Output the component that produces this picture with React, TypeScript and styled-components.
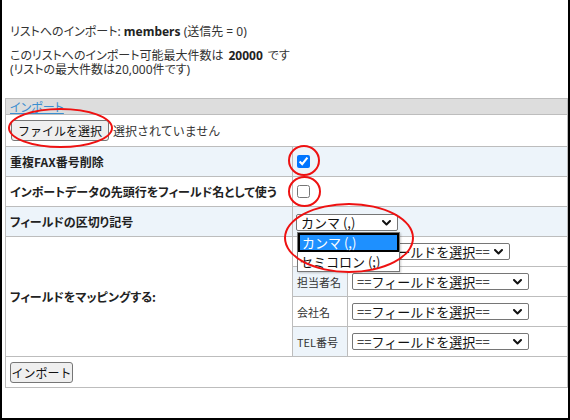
import React from "react";
import styled, { createGlobalStyle } from "styled-components";

const GlobalStyle = createGlobalStyle`
  html, body {
    margin: 0;
    padding: 0;
    background: #fff;
  }
  body {
    font-family: "Noto Sans", "Noto Sans CJK JP", sans-serif;
    font-size: 12px;
    color: #333;
  }
`;

const FONT = `"Noto Sans CJK JP", "Noto Sans", sans-serif`;

const Page = styled.div`
  position: relative;
  box-sizing: border-box;
  width: 570px;
  height: 420px;
  border: 2px solid #000;
  border-top: none;
  overflow: hidden;
  background: #fff;
`;

const Intro = styled.div`
  padding: 24px 0 0 8px;
  font-feature-settings: "palt";
`;

const Title = styled.p`
  margin: 0;
  line-height: 16px;
  color: #333;
  b {
    color: #222;
  }
`;

const Limit = styled.p`
  margin: 9px 0 0;
  line-height: 14px;
  b {
    color: #222;
    margin: 0 5px;
  }
`;

const FormTable = styled.table`
  margin: 21px 0 0 3px;
  width: calc(100% - 3px);
  table-layout: fixed;
  border-collapse: collapse;
  border: 1px solid #bdbdbd;
  font-family: ${FONT};
  font-feature-settings: "palt";
`;

const Col = styled.col<{ $w?: number }>`
  width: ${(p) => (p.$w ? `${p.$w}px` : "auto")};
`;

const HeadCell = styled.td`
  background: #dddddd;
  border: 1px solid #bdbdbd;
  height: 15px;
  padding: 0 4px;
  line-height: 14px;
  a {
    color: #3b8ed0;
    text-decoration: underline;
  }
`;

const Row = styled.tr<{ $tint?: boolean }>`
  background: ${(p) => (p.$tint ? "#edf4fa" : "#fff")};
`;

const LabelCell = styled.td<{ $h: number }>`
  height: ${(p) => p.$h}px;
  padding: 0 4px;
  border: 1px solid #bdbdbd;
  font-weight: bold;
  color: #222;
  line-height: 16px;
  box-sizing: border-box;
  white-space: nowrap;
`;

const FieldCell = styled.td<{ $flush?: boolean }>`
  padding: ${(p) => (p.$flush ? "0" : "0 3px")};
  border: 1px solid #bdbdbd;
  vertical-align: ${(p) => (p.$flush ? "top" : "middle")};
`;

const WideCell = styled.td<{ $h: number }>`
  height: ${(p) => p.$h}px;
  padding: 0 4px;
  border: 1px solid #bdbdbd;
  box-sizing: border-box;
`;

const FileRow = styled.div`
  display: flex;
  align-items: center;
  gap: 4px;
  padding-left: 1px;
`;

const PlainButton = styled.button<{ $w: number }>`
  width: ${(p) => p.$w}px;
  height: 21px;
  padding: 0;
  background: #efefef;
  border: 1px solid #767676;
  border-radius: 3px;
  font-family: ${FONT};
  font-feature-settings: normal;
  font-size: 12px;
  color: #111;
  line-height: 19px;
`;

const NoFile = styled.span`
  font-size: 12px;
  font-feature-settings: normal;
  color: #333;
`;

const Check = styled.input`
  width: 13px;
  height: 13px;
  margin: 0 0 0 1px;
  display: block;
`;

const SelectWrap = styled.div`
  position: relative;
  display: inline-block;
  vertical-align: middle;
`;

const SelectBox = styled.div<{ $w: number }>`
  box-sizing: border-box;
  width: ${(p) => p.$w}px;
  height: 17px;
  display: flex;
  align-items: center;
  justify-content: space-between;
  padding: 0 6px 0 4px;
  font-family: ${FONT};
  font-feature-settings: normal;
  font-size: 13px;
  line-height: 15px;
  color: #111;
  background: #fff;
  border: 1px solid #767676;
  border-radius: 2px;
  white-space: nowrap;
  overflow: hidden;
  svg {
    flex: none;
  }
`;

const OptionList = styled.div`
  position: absolute;
  top: 18px;
  left: 1px;
  width: 103px;
  box-sizing: border-box;
  border: 1px solid #767676;
  background: #fff;
  z-index: 5;
  font-feature-settings: normal;
  box-shadow: 1px 1px 2px rgba(0, 0, 0, 0.2);
`;

const Option = styled.div<{ $active?: boolean }>`
  height: ${(p) => (p.$active ? "15px" : "19px")};
  line-height: ${(p) => (p.$active ? "15px" : "19px")};
  padding: 0 2px;
  font-size: 13px;
  color: ${(p) => (p.$active ? "#fff" : "#111")};
  background: ${(p) => (p.$active ? "#1e90ff" : "#fff")};
  border: ${(p) => (p.$active ? "2px solid #000" : "none")};
  white-space: nowrap;
`;

const MapTable = styled.table`
  width: 100%;
  border-collapse: collapse;
  tr:first-child td {
    border-top: none;
  }
  tr:last-child td {
    border-bottom: none;
  }
  td:first-child {
    border-left: none;
  }
  td:last-child {
    border-right: none;
  }
`;

const MapLabel = styled.td<{ $tint?: boolean }>`
  width: 46px;
  height: 29px;
  padding: 0 4px;
  border: 1px solid #bdbdbd;
  background: ${(p) => (p.$tint ? "#edf4fa" : "#fff")};
  color: #333;
  font-size: 11px;
  white-space: nowrap;
`;

const MapField = styled.td`
  padding: 0 4px;
  border: 1px solid #bdbdbd;
  background: #fff;
`;

const Ring = styled.div<{ $x: number; $y: number; $w: number; $h: number }>`
  position: absolute;
  left: ${(p) => p.$x}px;
  top: ${(p) => p.$y}px;
  width: ${(p) => p.$w}px;
  height: ${(p) => p.$h}px;
  box-sizing: border-box;
  border: 2px solid #ee1111;
  border-radius: 50%;
  pointer-events: none;
  z-index: 10;
`;

const Chevron = () => (
  <svg width="9" height="6" viewBox="0 0 9 6">
    <polyline
      points="1,1 4.5,4.5 8,1"
      fill="none"
      stroke="#111"
      strokeWidth="2"
      strokeLinecap="round"
      strokeLinejoin="round"
    />
  </svg>
);

const FakeSelect = ({ width, value }: { width: number; value: string }) => (
  <SelectBox $w={width}>
    <span>{value}</span>
    <Chevron />
  </SelectBox>
);

const mapping = [
  { label: "FAX番号", width: 158 },
  { label: "担当者名", width: 177 },
  { label: "会社名", width: 177 },
  { label: "TEL番号", width: 177 },
];

export default function App() {
  return (
    <Page>
      <GlobalStyle />
      <Intro>
        <Title>
          リストへのインポート: <b>members</b> (送信先 = 0)
        </Title>
        <Limit>
          このリストへのインポート可能最大件数は<b>20000</b>です
          <br />
          (リストの最大件数は20,000件です)
        </Limit>
      </Intro>

      <FormTable>
        <colgroup>
          <Col $w={287} />
          <Col />
        </colgroup>
        <tbody>
          <tr>
            <HeadCell colSpan={2}>
              <a>インポート</a>
            </HeadCell>
          </tr>
          <Row>
            <WideCell colSpan={2} $h={32}>
              <FileRow>
                <PlainButton $w={98}>ファイルを選択</PlainButton>
                <NoFile>選択されていません</NoFile>
              </FileRow>
            </WideCell>
          </Row>
          <Row $tint>
            <LabelCell $h={30}>重複FAX番号削除</LabelCell>
            <FieldCell>
              <Check type="checkbox" defaultChecked />
            </FieldCell>
          </Row>
          <Row>
            <LabelCell $h={30}>インポートデータの先頭行をフィールド名として使う</LabelCell>
            <FieldCell>
              <Check type="checkbox" />
            </FieldCell>
          </Row>
          <Row $tint>
            <LabelCell $h={30}>フィールドの区切り記号</LabelCell>
            <FieldCell>
              <SelectWrap>
                <FakeSelect width={102} value="カンマ (,)" />
                <OptionList>
                  <Option $active>カンマ (,)</Option>
                  <Option>セミコロン (;)</Option>
                </OptionList>
              </SelectWrap>
            </FieldCell>
          </Row>
          <Row>
            <LabelCell $h={120}>フィールドをマッピングする:</LabelCell>
            <FieldCell $flush>
              <MapTable>
                <tbody>
                  {mapping.map((m, i) => (
                    <tr key={m.label}>
                      <MapLabel $tint={i % 2 === 1}>{m.label}</MapLabel>
                      <MapField>
                        <FakeSelect width={m.width} value="==フィールドを選択==" />
                      </MapField>
                    </tr>
                  ))}
                </tbody>
              </MapTable>
            </FieldCell>
          </Row>
          <Row>
            <WideCell colSpan={2} $h={31}>
              <PlainButton $w={63}>インポート</PlainButton>
            </WideCell>
          </Row>
        </tbody>
      </FormTable>

      <Ring $x={6} $y={108} $w={105} $h={40} />
      <Ring $x={286} $y={145} $w={32} $h={31} />
      <Ring $x={286} $y={176} $w={33} $h={31} />
      <Ring $x={282} $y={203} $w={130} $h={70} />
    </Page>
  );
}
